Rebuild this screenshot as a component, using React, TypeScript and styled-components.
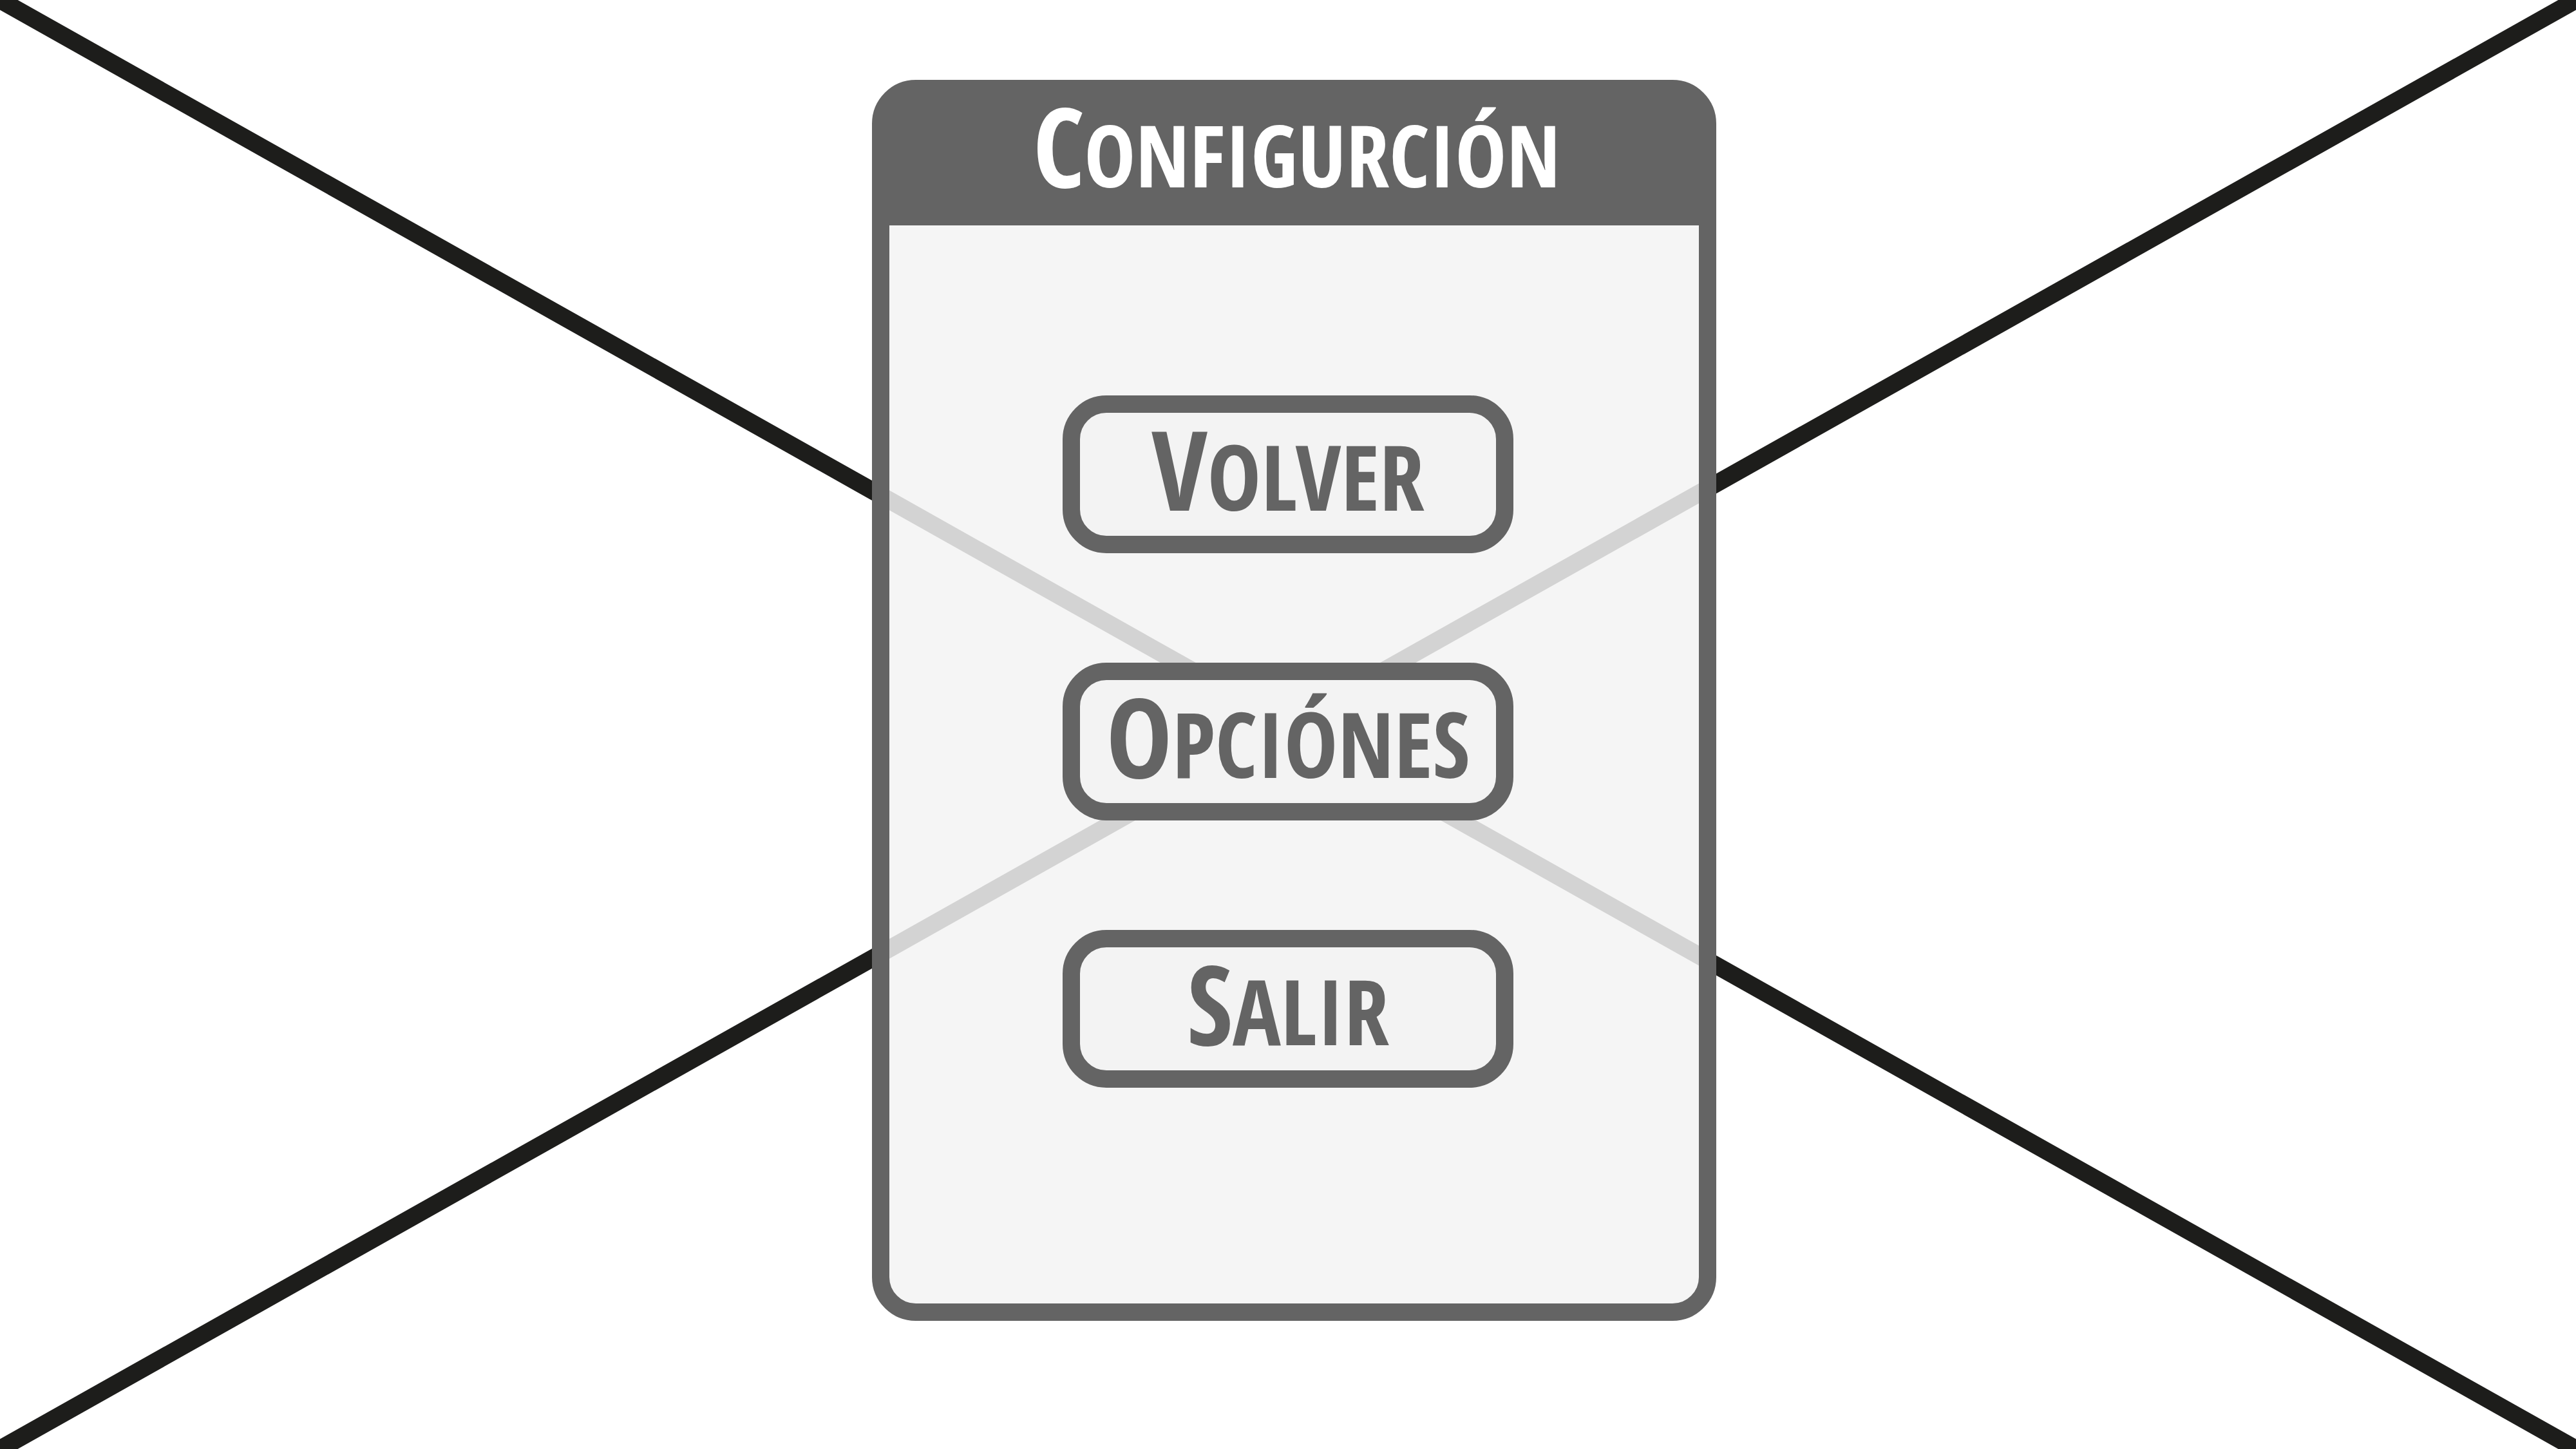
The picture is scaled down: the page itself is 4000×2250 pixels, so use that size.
import React from "react";
import styled, { createGlobalStyle, css } from "styled-components";

const ink = "#646464";
const line = "#1d1d1b";

const GlobalStyle = createGlobalStyle`
  *, *::before, *::after { box-sizing: border-box; }
  body { margin: 0; background: #ffffff; }
`;

const displayText = css`
  display: block;
  margin: 0;
  font-family: "Open Sans Condensed", "Roboto Condensed", "Liberation Sans", sans-serif;
  font-weight: 700;
  font-variant: small-caps;
  line-height: 136px;
  white-space: nowrap;

  &::first-letter {
    font-size: 172px;
  }
`;

const Page = styled.main`
  position: relative;
  display: grid;
  grid-template-columns: 1354fr 1311fr 1335fr;
  align-items: start;
  min-height: 100vh;
  padding: 124px 0;
`;

const Backdrop = styled.svg`
  position: absolute;
  inset: 0;
  width: 100%;
  height: 100%;
  stroke: ${line};
  stroke-width: 27px;
`;

const Panel = styled.section`
  position: relative;
  grid-column: 2;
  border: 27px solid ${ink};
  border-radius: 68px;
  background: rgba(243, 243, 243, 0.85) padding-box;
`;

const PanelHeader = styled.header`
  display: flex;
  align-items: center;
  justify-content: center;
  height: 199px;
  padding: 0 0 60px 8px;
  background: ${ink};
`;

const Title = styled.h1`
  ${displayText}
  font-size: 192px;
  color: #ffffff;
`;

const Menu = styled.nav`
  display: flex;
  flex-direction: column;
  align-items: center;
  gap: 170px;
  padding: 264px 19px 335px 0;
`;

const MenuButton = styled.button`
  display: flex;
  align-items: center;
  justify-content: center;
  width: 700px;
  height: 245px;
  padding: 0 0 32px;
  border: 27px solid ${ink};
  border-radius: 68px;
  background: #f3f3f3;
  color: ${ink};
  cursor: pointer;
`;

const ButtonLabel = styled.span`
  ${displayText}
  font-size: 200px;
`;

const options = ["Volver", "Opciónes", "Salir"];

export default function App() {
  return (
    <Page>
      <GlobalStyle />
      <Backdrop aria-hidden="true">
        <line x1="0" y1="0" x2="100%" y2="100%" />
        <line x1="100%" y1="0" x2="0" y2="100%" />
      </Backdrop>
      <Panel aria-labelledby="panel-title">
        <PanelHeader>
          <Title id="panel-title">Configurción</Title>
        </PanelHeader>
        <Menu aria-labelledby="panel-title">
          {options.map((option) => (
            <MenuButton key={option} type="button">
              <ButtonLabel>{option}</ButtonLabel>
            </MenuButton>
          ))}
        </Menu>
      </Panel>
    </Page>
  );
}
